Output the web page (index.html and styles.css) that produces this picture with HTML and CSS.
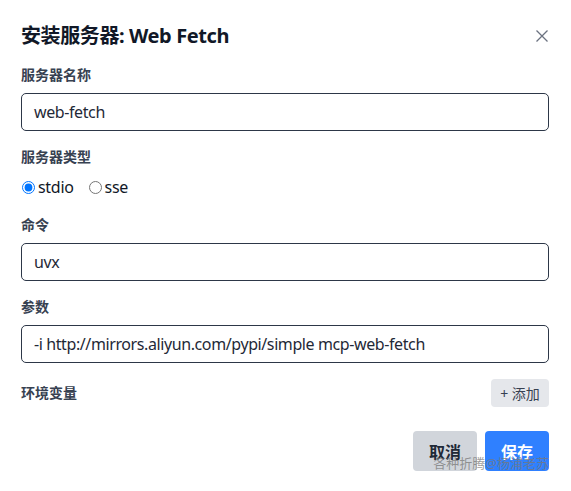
FILE: index.html
```html
<!DOCTYPE html>
<html lang="zh">
<head>
<meta charset="utf-8">
<link rel="stylesheet" href="styles.css">
</head>
<body>
<div class="dialog">
  <div class="header">
    <h2 class="title">安装服务器: Web Fetch</h2>
    <button class="close" aria-label="close">
      <svg width="14" height="14" viewBox="0 0 14 14"><path d="M1.5 1.5L12.5 12.5M12.5 1.5L1.5 12.5" stroke="#6b7280" stroke-width="1.3" fill="none"/></svg>
    </button>
  </div>
  <div class="field">
    <label class="label">服务器名称</label>
    <div class="input">web-fetch</div>
  </div>
  <div class="field">
    <label class="label">服务器类型</label>
    <div class="radios">
      <label class="radio"><input type="radio" name="t" checked> stdio</label>
      <label class="radio"><input type="radio" name="t"> sse</label>
    </div>
  </div>
  <div class="field">
    <label class="label">命令</label>
    <div class="input">uvx</div>
  </div>
  <div class="field">
    <label class="label">参数</label>
    <div class="input">-i http://mirrors.aliyun.com/pypi/simple mcp-web-fetch</div>
  </div>
  <div class="env">
    <span class="label">环境变量</span>
    <button class="add">+ 添加</button>
  </div>
  <div class="footer">
    <button class="btn cancel">取消</button>
    <button class="btn save">保存</button>
  </div>
  <div class="watermark">各种折腾@杨浦老苏</div>
</div>
</body>
</html>
```
FILE: styles.css
```css
html, body {
  margin: 0;
  padding: 0;
  background: #fff;
}
body {
  font-family: "Noto Sans", "Noto Sans CJK SC", sans-serif;
  color: #1f2937;
}
.dialog {
  position: relative;
  padding: 22px 22px 20px 21px;
  width: 571px;
  height: 491px;
  box-sizing: border-box;
}
.header {
  display: flex;
  justify-content: space-between;
  align-items: center;
  height: 28px;
  margin-bottom: 15px;
}
.title {
  margin: 0;
  font-size: 20px;
  font-weight: 700;
  line-height: 28px;
  color: #111827;
  letter-spacing: -0.4px;
}
.close {
  border: 0;
  background: none;
  padding: 0;
  width: 14px;
  height: 14px;
  display: flex;
}
.field {
  margin-bottom: 16px;
}
.label {
  display: block;
  font-size: 14px;
  font-weight: 700;
  line-height: 20px;
  color: #374151;
  margin-bottom: 8px;
}
.input {
  box-sizing: border-box;
  height: 38px;
  border: 1px solid #2d3748;
  border-radius: 5px;
  padding: 0 12px;
  font-size: 16px;
  line-height: 36px;
  color: #1f2937;
  letter-spacing: -0.4px;
}
.radios {
  display: flex;
  gap: 14px;
  height: 24px;
  align-items: center;
}
.radio {
  display: flex;
  align-items: center;
  font-size: 16px;
  color: #111827;
  gap: 2px;
  letter-spacing: -0.3px;
}
.radio input {
  margin: 0 1px;
  width: 13px;
  height: 13px;
}
.env {
  display: flex;
  justify-content: space-between;
  align-items: center;
  height: 28px;
  margin-top: 16px;
}
.env .label {
  margin: 0;
}
.add {
  border: 0;
  background: #e5e7eb;
  border-radius: 4px;
  height: 28px;
  width: 58px;
  padding: 0;
  font-family: inherit;
  font-size: 14px;
  color: #374151;
}
.footer {
  display: flex;
  justify-content: flex-end;
  gap: 8px;
  margin-top: 24px;
}
.btn {
  border: 0;
  border-radius: 4px;
  width: 64px;
  height: 40px;
  font-family: inherit;
  font-size: 16px;
  font-weight: 700;
}
.cancel {
  background: #d1d5db;
  color: #1f2937;
}
.save {
  background: #2f80ff;
  color: #fff;
}
.watermark {
  position: absolute;
  right: 22px;
  bottom: 19px;
  font-size: 13px;
  color: rgba(120, 120, 120, 0.75);
  pointer-events: none;
}
```
